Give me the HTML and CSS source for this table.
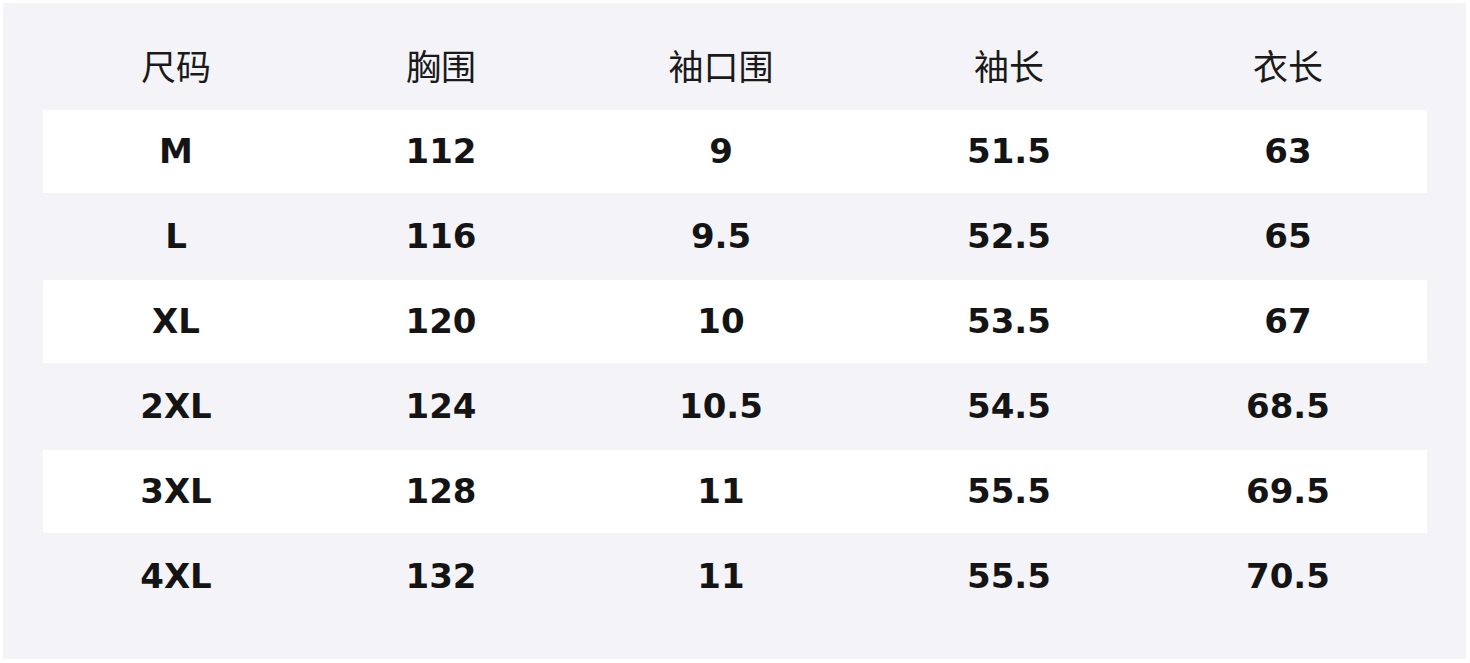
FILE: index.html
```html
<!DOCTYPE html>
<html lang="zh">
<head>
<meta charset="utf-8">
<link rel="stylesheet" href="styles.css">
</head>
<body>
<div class="panel">
  <table class="size-table">
    <colgroup>
      <col class="c1"><col class="c2"><col class="c3"><col class="c4"><col class="c5">
    </colgroup>
    <thead>
      <tr><th>尺码</th><th>胸围</th><th>袖口围</th><th>袖长</th><th>衣长</th></tr>
    </thead>
    <tbody>
      <tr class="odd"><td>M</td><td>112</td><td>9</td><td>51.5</td><td>63</td></tr>
      <tr><td>L</td><td>116</td><td>9.5</td><td>52.5</td><td>65</td></tr>
      <tr class="odd"><td>XL</td><td>120</td><td>10</td><td>53.5</td><td>67</td></tr>
      <tr><td>2XL</td><td>124</td><td>10.5</td><td>54.5</td><td>68.5</td></tr>
      <tr class="odd"><td>3XL</td><td>128</td><td>11</td><td>55.5</td><td>69.5</td></tr>
      <tr><td>4XL</td><td>132</td><td>11</td><td>55.5</td><td>70.5</td></tr>
    </tbody>
  </table>
</div>
</body>
</html>
```
FILE: styles.css
```css
html, body {
  margin: 0;
  padding: 0;
  background: #ffffff;
}
body {
  padding: 3px 4px 4px 3px;
}
.panel {
  width: 1463px;
  height: 656px;
  box-sizing: border-box;
  background: #f4f4f8;
  padding: 22px 39px 40px 40px;
}
.size-table {
  width: 1384px;
  border-collapse: separate;
  border-spacing: 0;
  table-layout: fixed;
  color: #141414;
}
.c1 { width: 266px; }
.c2 { width: 264px; }
.c3 { width: 296px; }
.c4 { width: 280px; }
.c5 { width: 278px; }
.size-table th {
  height: 84px;
  box-sizing: border-box;
  padding: 0 0 6px 0;
  text-align: center;
  font-family: "Noto Sans CJK SC", "Noto Sans", sans-serif;
  font-weight: 400;
  font-size: 35px;
  line-height: 1;
  color: #1a1a1a;
}
.size-table td {
  height: 85px;
  box-sizing: border-box;
  padding: 0 0 2px 0;
  border-top: 1px solid #f4f4f8;
  border-bottom: 1px solid #f4f4f8;
  text-align: center;
  font-family: "DejaVu Sans", sans-serif;
  font-weight: 700;
  font-size: 34px;
  line-height: 1;
}
.size-table tr.odd td {
  background: #ffffff;
}
```
